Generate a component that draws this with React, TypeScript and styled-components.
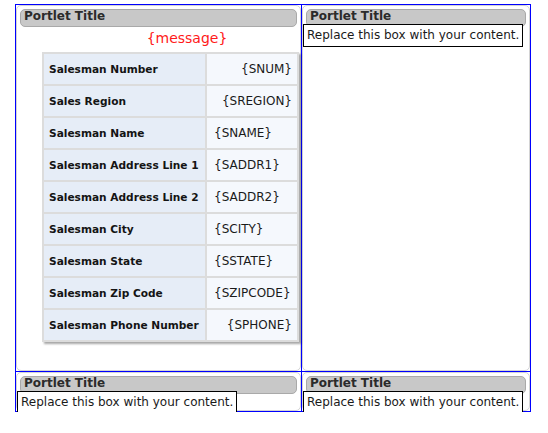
import React from "react";
import styled, { createGlobalStyle } from "styled-components";

const Global = createGlobalStyle`
  html, body { margin: 0; padding: 0; background: #fff; }
  body { font-family: "DejaVu Sans", Verdana, sans-serif; color: #111; }
`;

const Page = styled.div`
  padding: 4px 0 0 15px;
`;

const Layout = styled.div`
  display: grid;
  grid-template-columns: 285px 228px;
  grid-template-rows: 366px 39px;
  gap: 1px;
  border: 1px solid #0000ff;
  background: #0000ff;
  width: fit-content;
`;

const Cell = styled.div`
  background: #fff;
  display: flex;
  flex-direction: column;
  min-height: 0;
`;

const Frame = styled.div`
  flex: 1;
  min-height: 0;
  display: flex;
  flex-direction: column;
  border: 1px solid #d4d4d4;
  border-radius: 5px;
  background: #fff;
`;

const TitleBar = styled.div`
  flex-shrink: 0;
  margin: 3px 3px 0 3px;
  height: 16px;
  padding: 0 0 0 3px;
  border: 1px solid #a9a9a9;
  border-radius: 5px;
  background: #c8c8c8;
  color: #2b2b2b;
  font-weight: bold;
  font-size: 12px;
  line-height: 13px;
  white-space: nowrap;
`;

const ContentBox = styled.div`
  flex-shrink: 0;
  position: relative;
  margin-top: -3px;
  width: 220px;
  height: 23px;
  box-sizing: border-box;
  border: 1px solid #000;
  background: #fff;
  padding-left: 3px;
  font-size: 12px;
  line-height: 20px;
  color: #1a1a1a;
  white-space: nowrap;
`;

const Message = styled.div`
  flex-shrink: 0;
  padding-left: 57px;
  text-align: center;
  color: #ff1a1a;
  font-size: 14px;
  line-height: 22px;
`;

const FormGrid = styled.div`
  flex-shrink: 0;
  margin: 3px 0 0 auto;
  display: grid;
  grid-template-columns: 161px 90px;
  grid-auto-rows: 30px;
  gap: 2px;
  padding: 2px;
  background: #dcdcdc;
  box-shadow: 2px 2px 2px rgba(0, 0, 0, 0.35);
  width: fit-content;
  position: relative;
  right: 1px;
`;

const Label = styled.div`
  background: #e6edf7;
  display: flex;
  align-items: center;
  padding-left: 5px;
  font-size: 10.6px;
  font-weight: bold;
  color: #141414;
  white-space: nowrap;
`;

const Value = styled.div<{ $align: "left" | "right" }>`
  background: #f5f8fd;
  display: flex;
  align-items: center;
  justify-content: ${(p) => (p.$align === "right" ? "flex-end" : "flex-start")};
  padding: 0 5px 0 7px;
  font-size: 12px;
  color: #1a1a1a;
  white-space: nowrap;
`;

const rows: { label: string; value: string; align: "left" | "right" }[] = [
  { label: "Salesman Number", value: "{SNUM}", align: "right" },
  { label: "Sales Region", value: "{SREGION}", align: "right" },
  { label: "Salesman Name", value: "{SNAME}", align: "left" },
  { label: "Salesman Address Line 1", value: "{SADDR1}", align: "left" },
  { label: "Salesman Address Line 2", value: "{SADDR2}", align: "left" },
  { label: "Salesman City", value: "{SCITY}", align: "left" },
  { label: "Salesman State", value: "{SSTATE}", align: "left" },
  { label: "Salesman Zip Code", value: "{SZIPCODE}", align: "left" },
  { label: "Salesman Phone Number", value: "{SPHONE}", align: "right" },
];

function Portlet({ children }: { children?: React.ReactNode }) {
  return (
    <Cell>
      <Frame>
        <TitleBar>Portlet Title</TitleBar>
        {children ?? <ContentBox>Replace this box with your content.</ContentBox>}
      </Frame>
    </Cell>
  );
}

export default function App() {
  return (
    <>
      <Global />
      <Page>
        <Layout>
          <Portlet>
            <Message>{"{message}"}</Message>
            <FormGrid>
              {rows.map((r) => (
                <React.Fragment key={r.label}>
                  <Label>{r.label}</Label>
                  <Value $align={r.align}>{r.value}</Value>
                </React.Fragment>
              ))}
            </FormGrid>
          </Portlet>
          <Portlet />
          <Portlet />
          <Portlet />
        </Layout>
      </Page>
    </>
  );
}
